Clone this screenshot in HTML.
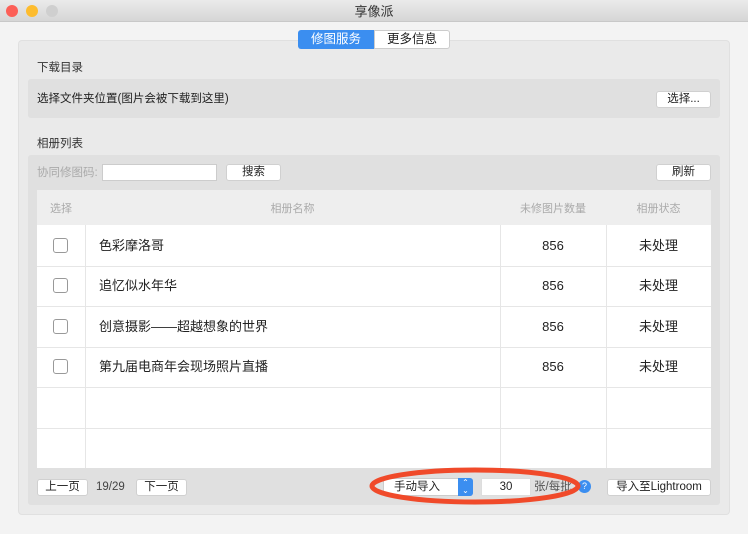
<!DOCTYPE html>
<html><head><meta charset="utf-8"><style>
*{margin:0;padding:0;box-sizing:border-box}
body{width:748px;height:534px;background:#f3f3f3;font-family:"Liberation Sans","Noto Sans CJK SC",sans-serif;font-size:12px;line-height:16px;color:#222;position:relative;overflow:hidden}
.a{position:absolute}
.btn{position:absolute;background:#fff;border:1px solid #d0d0d0;border-radius:3px;font-size:11.5px;text-align:center;line-height:15px;height:17px}
.r{position:absolute;font-size:13px;line-height:16px}
</style></head><body>
<div class="a" style="left:0;top:0;width:748px;height:22px;background:linear-gradient(#ebebeb,#d6d6d6);border-bottom:1px solid #c8c8c8"></div>
<div class="a" style="left:6px;top:5px;width:12px;height:12px;border-radius:6px;background:#fc5f57"></div>
<div class="a" style="left:26px;top:5px;width:12px;height:12px;border-radius:6px;background:#fdbc2e"></div>
<div class="a" style="left:46px;top:5px;width:12px;height:12px;border-radius:6px;background:#cfcfcf"></div>
<div class="a" style="left:0;top:4px;width:748px;text-align:center;font-size:13px;color:#333">享像派</div>
<div class="a" style="left:18px;top:40px;width:712px;height:475px;background:#eaeaea;border:1px solid #e0e0e0;border-radius:4px"></div>
<div class="a" style="left:298px;top:30px;width:76px;height:19px;background:#3b8ef0;border-radius:3px 0 0 3px;color:#fff;text-align:center;line-height:19px;font-size:12.5px">修图服务</div>
<div class="a" style="left:374px;top:30px;width:76px;height:19px;background:#fff;border:1px solid #ccc;border-radius:0 3px 3px 0;text-align:center;line-height:17px;font-size:12.5px">更多信息</div>
<div class="a" style="left:37px;top:60px;font-size:11.5px;color:#333">下载目录</div>
<div class="a" style="left:28px;top:79px;width:692px;height:39px;background:#e0e0e0;border-radius:3px"></div>
<div class="a" style="left:37px;top:91px;font-size:11.5px">选择文件夹位置(图片会被下载到这里)</div>
<div class="btn" style="left:656px;top:91px;width:55px">选择...</div>
<div class="a" style="left:37px;top:136px;font-size:11.5px;color:#333">相册列表</div>
<div class="a" style="left:28px;top:155px;width:692px;height:350px;background:#e0e0e0;border-radius:3px"></div>
<div class="a" style="left:37px;top:165px;font-size:11.5px;color:#aaa">协同修图码:</div>
<div class="a" style="left:102px;top:164px;width:115px;height:17px;background:#fff;border:1px solid #ccc"></div>
<div class="btn" style="left:226px;top:164px;width:55px">搜索</div>
<div class="btn" style="left:656px;top:164px;width:55px">刷新</div>
<div class="a" style="left:37px;top:190px;width:674px;height:278px;background:#fff"></div>
<div class="a" style="left:37px;top:190px;width:674px;height:35px;background:#eeeeee"></div>
<div class="a" style="left:37px;top:201px;width:48px;text-align:center;font-size:11px;color:#aaa">选择</div>
<div class="a" style="left:85px;top:201px;width:415px;text-align:center;font-size:11px;color:#aaa">相册名称</div>
<div class="a" style="left:500px;top:201px;width:106px;text-align:center;font-size:11px;color:#aaa">未修图片数量</div>
<div class="a" style="left:606px;top:201px;width:105px;text-align:center;font-size:11px;color:#aaa">相册状态</div>
<div class="a" style="left:85px;top:225px;width:1px;height:243px;background:#e6e6e6"></div>
<div class="a" style="left:500px;top:225px;width:1px;height:243px;background:#e6e6e6"></div>
<div class="a" style="left:606px;top:225px;width:1px;height:243px;background:#e6e6e6"></div>
<div class="a" style="left:37px;top:266px;width:674px;height:1px;background:#e6e6e6"></div>
<div class="a" style="left:37px;top:306px;width:674px;height:1px;background:#e6e6e6"></div>
<div class="a" style="left:37px;top:347px;width:674px;height:1px;background:#e6e6e6"></div>
<div class="a" style="left:37px;top:387px;width:674px;height:1px;background:#e6e6e6"></div>
<div class="a" style="left:37px;top:428px;width:674px;height:1px;background:#e6e6e6"></div>
<div class="a" style="left:53px;top:238px;width:15px;height:15px;border:1px solid #999;border-radius:3px;background:#fff"></div>
<div class="r" style="left:99px;top:238px">色彩摩洛哥</div>
<div class="r" style="left:500px;top:238px;width:106px;text-align:center">856</div>
<div class="r" style="left:606px;top:238px;width:105px;text-align:center">未处理</div>
<div class="a" style="left:53px;top:278px;width:15px;height:15px;border:1px solid #999;border-radius:3px;background:#fff"></div>
<div class="r" style="left:99px;top:278px">追忆似水年华</div>
<div class="r" style="left:500px;top:278px;width:106px;text-align:center">856</div>
<div class="r" style="left:606px;top:278px;width:105px;text-align:center">未处理</div>
<div class="a" style="left:53px;top:319px;width:15px;height:15px;border:1px solid #999;border-radius:3px;background:#fff"></div>
<div class="r" style="left:99px;top:319px">创意摄影——超越想象的世界</div>
<div class="r" style="left:500px;top:319px;width:106px;text-align:center">856</div>
<div class="r" style="left:606px;top:319px;width:105px;text-align:center">未处理</div>
<div class="a" style="left:53px;top:359px;width:15px;height:15px;border:1px solid #999;border-radius:3px;background:#fff"></div>
<div class="r" style="left:99px;top:359px">第九届电商年会现场照片直播</div>
<div class="r" style="left:500px;top:359px;width:106px;text-align:center">856</div>
<div class="r" style="left:606px;top:359px;width:105px;text-align:center">未处理</div>
<div class="btn" style="left:37px;top:479px;width:51px">上一页</div>
<div class="a" style="left:96px;top:479px;font-size:11.5px;color:#444">19/29</div>
<div class="btn" style="left:136px;top:479px;width:51px">下一页</div>
<div class="a" style="left:383px;top:478px;width:90px;height:18px;background:#fff;border:1px solid #ccc;border-radius:3px;font-size:11.5px;line-height:16px;padding-left:10px">手动导入</div>
<div class="a" style="left:458px;top:478px;width:15px;height:18px;background:#3b8ef0;border-radius:0 3px 3px 0;color:#fff;font-size:8px;text-align:center;line-height:8px;padding-top:1px">⌃<br>⌄</div>
<div class="a" style="left:481px;top:478px;width:50px;height:18px;background:#fff;border:1px solid #ddd;text-align:center;font-size:11.5px;line-height:16px">30</div>
<div class="a" style="left:534px;top:479px;font-size:11.5px;color:#555">张/每批</div>
<div class="a" style="left:578px;top:480px;width:13px;height:13px;border-radius:7px;background:#3b8ef0;color:#fff;font-size:9px;text-align:center;line-height:13px">?</div>
<div class="btn" style="left:607px;top:479px;width:104px">导入至Lightroom</div>
<svg class="a" style="left:0;top:0" width="748" height="534"><ellipse cx="475" cy="486" rx="103" ry="16" fill="none" stroke="#f04a2a" stroke-width="5"/></svg>
</body></html>
